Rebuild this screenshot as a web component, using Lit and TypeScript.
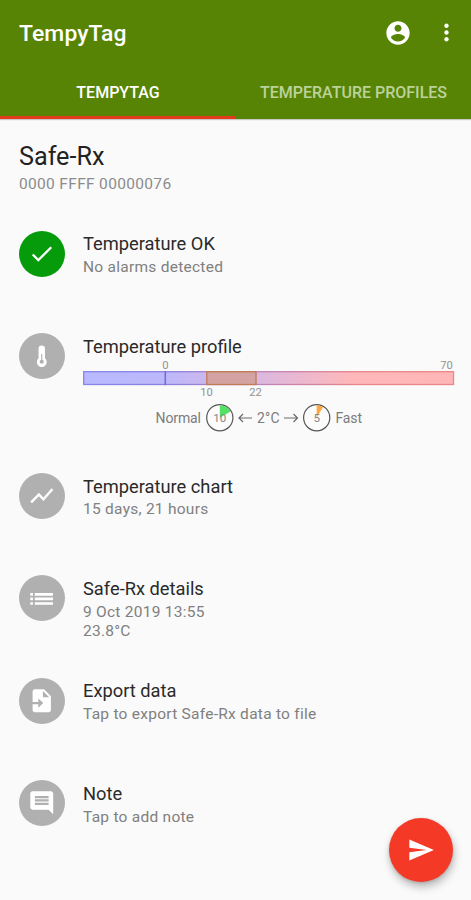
import { LitElement, html, svg, css } from "lit";
import { customElement, property } from "lit/decorators.js";

const icons: Record<string, unknown> = {
  check: svg`<path d="M9 16.17 4.83 12l-1.42 1.41L9 19 21 7l-1.41-1.41z"/>`,
  thermo: svg`<path fill-rule="evenodd" d="M9.2 5.9a2.8 2.8 0 0 1 5.6 0v8.3a4.3 4.3 0 1 1-5.6 0zM11.5 10.5v4.9a1.8 1.8 0 1 0 1 0v-4.9z"/>`,
  chart: svg`<path d="M3.5 18.49l6-6.01 4 4L22 6.92l-1.41-1.41-7.09 7.97-4-4L2 16.99z"/>`,
  list: svg`<path d="M2 11h2.3v2.3H2zM2 7h2.3v2.3H2zM2 15h2.3v2.3H2zM5.9 7H21.8v2.3H5.9zM5.9 11H21.8v2.3H5.9zM5.9 15H21.8v2.3H5.9z"/>`,
  export: svg`<path fill-rule="evenodd" d="M14 2H6c-1.1 0-1.99.9-1.99 2v9H9v-3l4.3 4L9 18v-3H4.01v5c0 1.1.89 2 1.99 2h12c1.1 0 2-.9 2-2V8l-6-6zm-1 7V3.5L18.5 9H13z"/>`,
  note: svg`<path d="M21.99 4c0-1.1-.89-2-1.99-2H4c-1.1 0-2 .9-2 2v12c0 1.1.9 2 2 2h14l4 4-.01-18zM18 14H6v-2h12v2zm0-3H6V9h12v2zm0-3H6V6h12v2z"/>`,
  account: svg`<path d="M12 2C6.48 2 2 6.48 2 12s4.48 10 10 10 10-4.48 10-10S17.52 2 12 2zm0 3c1.66 0 3 1.34 3 3s-1.34 3-3 3-3-1.34-3-3 1.34-3 3-3zm0 14.2c-2.5 0-4.71-1.28-6-3.22.03-1.99 4-3.08 6-3.08 1.99 0 5.97 1.09 6 3.08-1.29 1.94-3.5 3.22-6 3.22z"/>`,
  more: svg`<path d="M12 8c1.1 0 2-.9 2-2s-.9-2-2-2-2 .9-2 2 .9 2 2 2zm0 2c-1.1 0-2 .9-2 2s.9 2 2 2 2-.9 2-2-.9-2-2-2zm0 6c-1.1 0-2 .9-2 2s.9 2 2 2 2-.9 2-2-.9-2-2-2z"/>`,
  send: svg`<path d="M2.01 21L23 12 2.01 3 2 10l15 2-15 2z"/>`,
};

const icon = (name: string, size: number) =>
  html`<svg viewBox="0 0 24 24" width=${size} height=${size} fill="currentColor">${icons[name]}</svg>`;

@customElement("temperature-scale")
class TemperatureScale extends LitElement {
  static styles = css`
    :host { display: block; height: 80px; margin-top: -1px; }
    svg { display: block; overflow: visible; font-family: Roboto, sans-serif; }
    .tick { font-size: 11.2px; fill: #929292; text-anchor: middle; }
    .caption { font-size: 14px; fill: #7c7c7c; }
    .dial { fill: #fcfcfc; stroke: #555; stroke-width: 1.2; }
    .count { font-size: 11.6px; fill: #888; text-anchor: middle; }
    .arrow { fill: none; stroke: #6a6a6a; stroke-width: 1.2; }
  `;
  render() {
    return html`<svg width="372" height="80" viewBox="0 0 372 80">
      <defs>
        <linearGradient id="range" x1="0" x2="1">
          <stop offset="0" stop-color="#b9b9ff" />
          <stop offset=".21" stop-color="#bcb8fb" />
          <stop offset=".47" stop-color="#dab8e0" />
          <stop offset=".73" stop-color="#ffb8ba" />
          <stop offset="1" stop-color="#ffb6b6" />
        </linearGradient>
        <linearGradient id="edge" gradientUnits="userSpaceOnUse" x1="0" x2="371" y1="0" y2="0">
          <stop offset="0" stop-color="#8585ea" />
          <stop offset=".22" stop-color="#8a80e2" />
          <stop offset=".47" stop-color="#bd83bd" />
          <stop offset=".75" stop-color="#ea8387" />
          <stop offset="1" stop-color="#ee8484" />
        </linearGradient>
      </defs>
      <rect x=".7" y="13.7" width="369.8" height="12.8" fill="url(#range)" stroke="url(#edge)" stroke-width="1.3" />
      <path d="M82.3 13v14.2" stroke="#7468da" stroke-width="1.5" />
      <rect x="123.8" y="13.7" width="49.2" height="12.8" fill="#d3a3a4" stroke="#c07a55" stroke-width="1.3" />
      <text class="tick" x="82.5" y="10.6">0</text>
      <text class="tick" x="363.5" y="10.6">70</text>
      <text class="tick" x="123.5" y="38.4">10</text>
      <text class="tick" x="172.5" y="38.4">22</text>
      <text class="caption" x="72.5" y="65.3" textLength="45.5">Normal</text>
      <circle class="dial" cx="136.8" cy="59.7" r="13.1" />
      <path d="M136.8 59.7V47.2A12.5 12.5 0 0 1 147.6 53.4Z" fill="#54e264" />
      <text class="count" x="136.8" y="63.8">10</text>
      <path class="arrow" d="M169 60h-13M160 56l-4 4 4 4" />
      <text class="caption" x="174" y="65.3" textLength="22.5">2°C</text>
      <path class="arrow" d="M201 60h13.5M210.5 56l4 4-4 4" />
      <circle class="dial" cx="233.7" cy="59.7" r="13.1" />
      <path d="M233.7 59.7V47.2A12.5 12.5 0 0 1 240 48.9Z" fill="#ffa843" />
      <text class="count" x="233.7" y="63.8">5</text>
      <text class="caption" x="252.5" y="65.3" textLength="26.5">Fast</text>
    </svg>`;
  }
}

@customElement("action-row")
class ActionRow extends LitElement {
  @property() icon = "";
  @property() heading = "";
  @property({ attribute: false }) lines: string[] = [];
  @property({ type: Boolean, reflect: true }) ok = false;
  static styles = css`
    :host { display: grid; grid-template-columns: 46px 372px; column-gap: 18px; height: 102.4px; align-items: start; }
    .disc { width: 46px; height: 46px; border-radius: 50%; background: #b0b0b0; color: #fff; display: grid; place-items: center; }
    :host([ok]) .disc { background: #069b0a; }
    .heading { font-size: 18.3px; line-height: 24px; color: #2a2a2a; margin-top: 1.8px; }
    .line { font-size: 15.5px; line-height: 19px; letter-spacing: .26px; color: #808080; }
    .lines { padding-top: 1.8px; }
    svg { display: block; }
  `;
  render() {
    return html`<div class="disc">${icon(this.icon, 27.5)}</div>
      <div>
        <div class="heading">${this.heading}</div>
        ${this.lines.length
          ? html`<div class="lines">${this.lines.map((l) => html`<div class="line">${l}</div>`)}</div>`
          : ""}
        <slot></slot>
      </div>`;
  }
}

@customElement("app-root")
class AppRoot extends LitElement {
  static styles = css`
    :host { display: block; width: 471px; height: 900px; background: #fafafa; font-family: Roboto, sans-serif; overflow: hidden; position: relative; }
    header { background: #578404; color: #fff; height: 119px; box-shadow: 0 1px 1px #0003; }
    .bar { display: flex; align-items: center; height: 66px; padding: 0 11.5px 0 19px; box-sizing: border-box; }
    .bar svg { display: block; }
    .brand { flex: 1; font-size: 22.9px; font-weight: 500; letter-spacing: .1px; }
    .tools { display: flex; gap: 21px; }
    .tabs { display: grid; grid-template-columns: 236px 235px; height: 53px; }
    .tab { display: flex; align-items: center; justify-content: center; font-size: 16px; font-weight: 500; color: #bcd29b; box-sizing: border-box; border-bottom: 3.5px solid transparent; padding-top: 3px; white-space: nowrap; }
    .active { color: #fff; border-color: #e33a1c; }
    main { padding: 23px 16px 0 19px; }
    h1 { font-size: 25.2px; font-weight: 400; line-height: 30px; margin: 0; color: #222; }
    .serial { font-size: 15.5px; line-height: 20px; margin-top: 2px; color: #8c8c8c; letter-spacing: .33px; }
    .rows { margin-top: 36.6px; }
    .profile { height: 139.9px; }
    .send { position: absolute; right: 18px; bottom: 18px; width: 64px; height: 64px; border-radius: 50%; background: #f43a26; color: #fff; display: grid; place-items: center; box-shadow: 1px 5px 8px #0004, 0 1px 3px #0002; }
  `;
  render() {
    return html`
      <header>
        <div class="bar">
          <div class="brand">TempyTag</div>
          <div class="tools">${icon("account", 28)}${icon("more", 27)}</div>
        </div>
        <div class="tabs">
          <div class="tab active">TEMPYTAG</div>
          <div class="tab">TEMPERATURE PROFILES</div>
        </div>
      </header>
      <main>
        <h1>Safe-Rx</h1>
        <div class="serial">0000 FFFF 00000076</div>
        <div class="rows">
          <action-row ok icon="check" heading="Temperature OK" .lines=${["No alarms detected"]}></action-row>
          <action-row class="profile" icon="thermo" heading="Temperature profile">
            <temperature-scale></temperature-scale>
          </action-row>
          <action-row icon="chart" heading="Temperature chart" .lines=${["15 days, 21 hours"]}></action-row>
          <action-row icon="list" heading="Safe-Rx details" .lines=${["9 Oct 2019 13:55", "23.8°C"]}></action-row>
          <action-row icon="export" heading="Export data" .lines=${["Tap to export Safe-Rx data to file"]}></action-row>
          <action-row icon="note" heading="Note" .lines=${["Tap to add note"]}></action-row>
        </div>
      </main>
      <div class="send">${icon("send", 28)}</div>
    `;
  }
}
